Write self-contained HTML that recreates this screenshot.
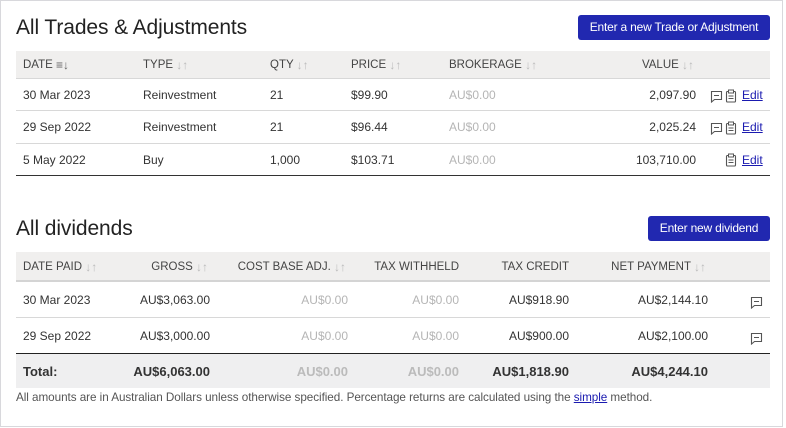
<!DOCTYPE html>
<html><head><style>
*{margin:0;padding:0;box-sizing:border-box}
body{width:786px;height:428px;background:#fff;font-family:"Liberation Sans",Arial,sans-serif;color:#333;font-size:12px;position:relative;overflow:hidden}
.frame{position:absolute;left:0;top:0;width:783px;height:427px;border:1px solid #d8d8dc}
.a{position:absolute;white-space:nowrap}
h1{position:absolute;font-weight:normal;font-size:21px;color:#222;left:16px;letter-spacing:-0.1px}
.btn{position:absolute;background:#2128b0;color:#fff;border-radius:3px;font-size:12px;text-align:center;line-height:25px;height:25px;letter-spacing:-0.2px}
.hd{position:absolute;left:16px;width:754px;background:#f0efee}
.hl{position:absolute;left:16px;width:754px;height:1px;background:#d8d8d8}
.dk{position:absolute;left:16px;width:754px;background:#333}
.th{color:#444;font-size:11.5px;line-height:14px;top:auto}
.s{color:#bbb;font-size:12px;line-height:14px;vertical-align:top}
.g{color:#b5b5b5}
.r{text-align:right}
.b{font-weight:bold;font-size:13px;color:#333}
a{color:#1a1ab0;text-decoration:underline}
svg{position:absolute}
</style></head><body>
<div class="frame"></div>
<h1 style="top:16px">All Trades &amp; Adjustments</h1>
<div class="btn" style="left:578px;top:15px;width:192px">Enter a new Trade or Adjustment</div>
<div class="hd" style="top:51px;height:27px"></div>
<div class="hl" style="top:78px"></div>
<div class="a th" style="left:23px;top:58px">DATE <span class="s" style="color:#666">&#8801;&#8595;</span></div>
<div class="a th" style="left:143px;top:58px">TYPE <span class="s">↓↑</span></div>
<div class="a th" style="left:270px;top:58px">QTY <span class="s">↓↑</span></div>
<div class="a th" style="left:351px;top:58px">PRICE <span class="s">↓↑</span></div>
<div class="a th" style="left:449px;top:58px">BROKERAGE <span class="s">↓↑</span></div>
<div class="a th r" style="right:92px;top:58px">VALUE <span class="s">↓↑</span></div>

<div class="a" style="left:23px;top:88px">30 Mar 2023</div><div class="a" style="left:143px;top:88px">Reinvestment</div><div class="a" style="left:270px;top:88px">21</div><div class="a" style="left:351px;top:88px">$99.90</div><div class="a g" style="left:449px;top:88px">AU$0.00</div><div class="a r" style="right:90px;top:88px">2,097.90</div>
<div class="hl" style="top:110px"></div>
<div class="a" style="left:23px;top:120px">29 Sep 2022</div><div class="a" style="left:143px;top:120px">Reinvestment</div><div class="a" style="left:270px;top:120px">21</div><div class="a" style="left:351px;top:120px">$96.44</div><div class="a g" style="left:449px;top:120px">AU$0.00</div><div class="a r" style="right:90px;top:120px">2,025.24</div>
<div class="hl" style="top:143px"></div>
<div class="a" style="left:23px;top:153px">5 May 2022</div><div class="a" style="left:143px;top:153px">Buy</div><div class="a" style="left:270px;top:153px">1,000</div><div class="a" style="left:351px;top:153px">$103.71</div><div class="a g" style="left:449px;top:153px">AU$0.00</div><div class="a r" style="right:90px;top:153px">103,710.00</div>
<div class="dk" style="top:175px;height:1px"></div>

<svg style="left:710px;top:90px" width="13" height="13" viewBox="0 0 13 13"><path d="M1.5 1.5h10v8h-7l-3 2.5z" fill="none" stroke="#555" stroke-width="1.1"/><path d="M4 5.5h5" stroke="#555"/></svg>
<svg style="left:725px;top:89px" width="12" height="14" viewBox="0 0 12 14"><rect x="1.5" y="2.5" width="9" height="10.5" rx="1" fill="none" stroke="#555" stroke-width="1.1"/><rect x="3.5" y="1" width="5" height="3" fill="#fff" stroke="#555"/><path d="M3.5 7h5M3.5 9.5h5" stroke="#555"/></svg>
<div class="a" style="left:742px;top:88px"><a>Edit</a></div>
<svg style="left:710px;top:122px" width="13" height="13" viewBox="0 0 13 13"><path d="M1.5 1.5h10v8h-7l-3 2.5z" fill="none" stroke="#555" stroke-width="1.1"/><path d="M4 5.5h5" stroke="#555"/></svg>
<svg style="left:725px;top:121px" width="12" height="14" viewBox="0 0 12 14"><rect x="1.5" y="2.5" width="9" height="10.5" rx="1" fill="none" stroke="#555" stroke-width="1.1"/><rect x="3.5" y="1" width="5" height="3" fill="#fff" stroke="#555"/><path d="M3.5 7h5M3.5 9.5h5" stroke="#555"/></svg>
<div class="a" style="left:742px;top:120px"><a>Edit</a></div>
<svg style="left:725px;top:153px" width="12" height="14" viewBox="0 0 12 14"><rect x="1.5" y="2.5" width="9" height="10.5" rx="1" fill="none" stroke="#555" stroke-width="1.1"/><rect x="3.5" y="1" width="5" height="3" fill="#fff" stroke="#555"/><path d="M3.5 7h5M3.5 9.5h5" stroke="#555"/></svg>
<div class="a" style="left:742px;top:153px"><a>Edit</a></div>

<h1 style="top:217px">All dividends</h1>
<div class="btn" style="left:648px;top:216px;width:122px">Enter new dividend</div>
<div class="hd" style="top:252px;height:29px"></div>
<div class="a" style="left:16px;top:280px;width:754px;height:2px;background:#d4d4d4"></div>
<div class="a th" style="left:23px;top:260px">DATE PAID <span class="s">↓↑</span></div>
<div class="a th r" style="right:578px;top:260px">GROSS <span class="s">↓↑</span></div>
<div class="a th r" style="right:440px;top:260px">COST BASE ADJ. <span class="s">↓↑</span></div>
<div class="a th r" style="right:327px;top:260px">TAX WITHHELD</div>
<div class="a th r" style="right:217px;top:260px">TAX CREDIT</div>
<div class="a th r" style="right:80px;top:260px">NET PAYMENT <span class="s">↓↑</span></div>

<div class="a" style="left:23px;top:293px">30 Mar 2023</div><div class="a r" style="right:576px;top:293px">AU$3,063.00</div><div class="a r g" style="right:438px;top:293px">AU$0.00</div><div class="a r g" style="right:327px;top:293px">AU$0.00</div><div class="a r" style="right:217px;top:293px">AU$918.90</div><div class="a r" style="right:78px;top:293px">AU$2,144.10</div>
<div class="hl" style="top:317px"></div>
<div class="a" style="left:23px;top:329px">29 Sep 2022</div><div class="a r" style="right:576px;top:329px">AU$3,000.00</div><div class="a r g" style="right:438px;top:329px">AU$0.00</div><div class="a r g" style="right:327px;top:329px">AU$0.00</div><div class="a r" style="right:217px;top:329px">AU$900.00</div><div class="a r" style="right:78px;top:329px">AU$2,100.00</div>
<svg style="left:750px;top:296px" width="13" height="13" viewBox="0 0 13 13"><path d="M1.5 1.5h10v8h-7l-3 2.5z" fill="none" stroke="#555" stroke-width="1.1"/><path d="M4 5.5h5" stroke="#555"/></svg>
<svg style="left:750px;top:332px" width="13" height="13" viewBox="0 0 13 13"><path d="M1.5 1.5h10v8h-7l-3 2.5z" fill="none" stroke="#555" stroke-width="1.1"/><path d="M4 5.5h5" stroke="#555"/></svg>
<div class="hd" style="top:353px;height:35px;background:#efeff0"></div>
<div class="dk" style="top:353px;height:1px;background:#222"></div>
<div class="a b" style="left:23px;top:364px">Total:</div>
<div class="a b r" style="right:576px;top:364px">AU$6,063.00</div>
<div class="a b r" style="right:438px;top:364px;color:#bbb">AU$0.00</div>
<div class="a b r" style="right:327px;top:364px;color:#bbb">AU$0.00</div>
<div class="a b r" style="right:217px;top:364px">AU$1,818.90</div>
<div class="a b r" style="right:78px;top:364px">AU$4,244.10</div>
<div class="a" style="left:16px;top:391px;color:#555;font-size:11.7px;letter-spacing:-0.05px">All amounts are in Australian Dollars unless otherwise specified. Percentage returns are calculated using the <a>simple</a> method.</div>
</body></html>
